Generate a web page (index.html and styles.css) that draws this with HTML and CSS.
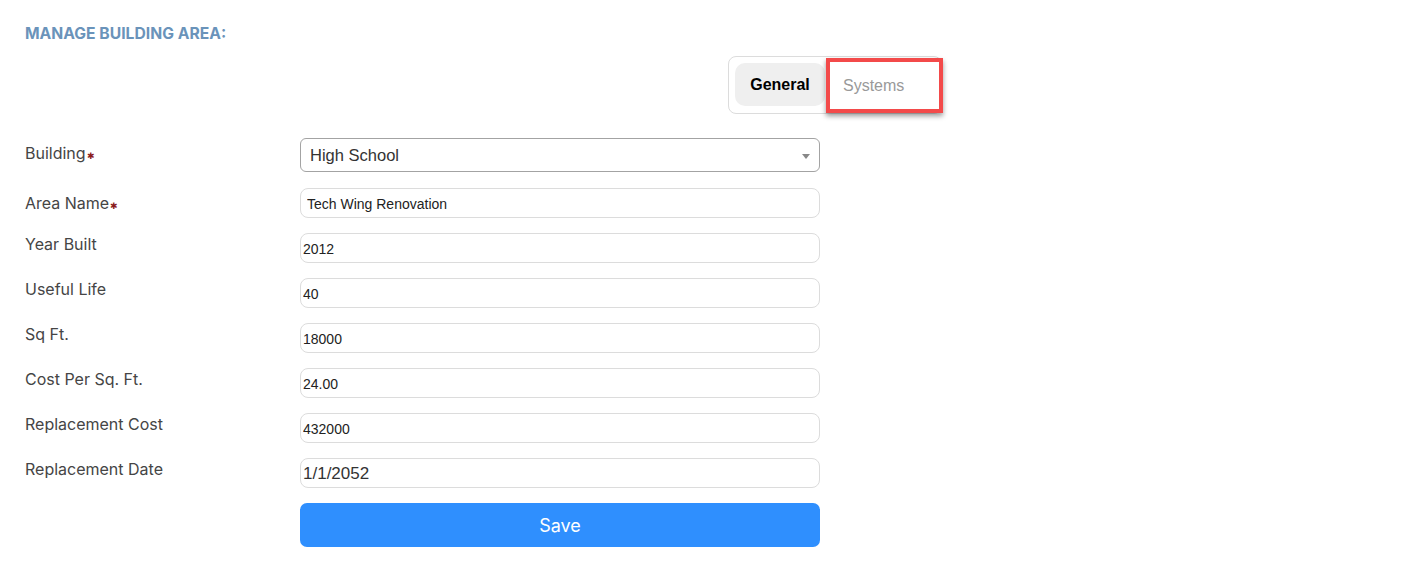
FILE: index.html
```html
<!DOCTYPE html>
<html>
<head>
<meta charset="utf-8">
<link rel="stylesheet" href="styles.css">
</head>
<body>
<div class="page">
  <h1 class="title">MANAGE BUILDING AREA:</h1>
  <div class="tabs-row">
    <div class="tabs">
      <button class="tab tab-active">General</button>
      <button class="tab">Systems</button>
      <span class="highlight"></span>
    </div>
  </div>
  <form class="form">
    <label class="label label-req">Building<span class="req">&#10033;</span></label>
    <div class="select"><span>High School</span><span class="caret"></span></div>

    <label class="label label-req">Area Name<span class="req">&#10033;</span></label>
    <input class="input pad" value="Tech Wing Renovation">

    <label class="label">Year Built</label>
    <input class="input" value="2012">

    <label class="label">Useful Life</label>
    <input class="input" value="40">

    <label class="label">Sq Ft.</label>
    <input class="input" value="18000">

    <label class="label">Cost Per Sq. Ft.</label>
    <input class="input" value="24.00">

    <label class="label">Replacement Cost</label>
    <input class="input" value="432000">

    <label class="label">Replacement Date</label>
    <input class="input big" value="1/1/2052">

    <span></span>
    <button type="button" class="save">Save</button>
  </form>
</div>
</body>
</html>
```
FILE: styles.css
```css
html, body {
  margin: 0;
  padding: 0;
  background: #fff;
}

.page {
  padding: 24px 25px 0 25px;
  font-family: Inter, "Liberation Sans", sans-serif;
}

.title {
  margin: 0;
  font-size: 15.7px;
  line-height: 19px;
  font-weight: 700;
  color: #6a93ba;
}

.tabs-row {
  display: flex;
  margin-top: 13px;
  padding-left: 703px;
}

.tabs {
  position: relative;
  display: flex;
  border: 1px solid #dcdcdc;
  border-radius: 8px;
  padding: 6px 6px 7px 6px;
}

.tab {
  font-family: "Liberation Sans", Arial, sans-serif;
  font-size: 16px;
  border: none;
  background: transparent;
  height: 43px;
  width: 110px;
  text-align: left;
  padding: 2px 0 0 18px;
  color: #999;
  border-radius: 10px;
}

.tab-active {
  width: 90px;
  padding: 0;
  text-align: center;
  background: #efefef;
  color: #000;
  font-weight: 700;
}

.highlight {
  position: absolute;
  left: 97px;
  top: 1px;
  width: 109px;
  height: 47px;
  border: 4px solid #f34a4a;
  box-shadow: 0 3px 5px rgba(0, 0, 0, 0.4);
}

.form {
  display: grid;
  grid-template-columns: 275px 520px;
  row-gap: 15px;
  margin-top: 24px;
}

.label {
  font-size: 16px;
  line-height: 20px;
  color: #454545;
  padding-top: 1px;
}

.label-req {
  padding-top: 5px;
}

.req {
  color: #8b1c1c;
  font-size: 9px;
  margin-left: 1px;
}

.select {
  box-sizing: border-box;
  height: 34px;
  border: 1px solid #a3a3a3;
  border-radius: 6px;
  display: flex;
  align-items: center;
  justify-content: space-between;
  padding: 0 9px 0 9px;
  font-family: "Liberation Sans", Arial, sans-serif;
  font-size: 16.5px;
  color: #333;
  margin-bottom: 1px;
}

.caret {
  width: 0;
  height: 0;
  border-left: 4px solid transparent;
  border-right: 4px solid transparent;
  border-top: 5px solid #888;
  margin-top: 2px;
}

.input {
  box-sizing: border-box;
  height: 30px;
  border: 1px solid #dcdcdc;
  border-radius: 8px;
  padding: 2px 2px 0 2px;
  font-family: "Liberation Sans", Arial, sans-serif;
  font-size: 14px;
  color: #222;
  outline: none;
}

.input.pad {
  padding: 2px 6px 0 6px;
}

.input.big {
  font-size: 17px;
  color: #333;
}

.save {
  height: 44px;
  border: none;
  border-radius: 7px;
  background: #2f8ffe;
  color: #fff;
  font-family: Inter, "Liberation Sans", sans-serif;
  font-size: 18px;
}
```
